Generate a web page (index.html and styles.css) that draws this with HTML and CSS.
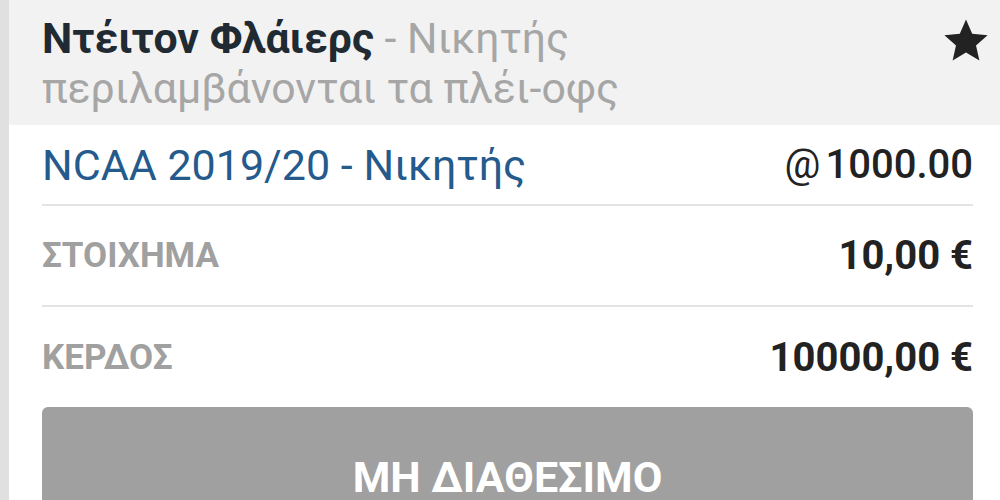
FILE: index.html
```html
<!DOCTYPE html>
<html lang="el">
<head>
<meta charset="utf-8">
<link rel="stylesheet" href="styles.css">
</head>
<body>
<div class="page">
  <div class="rail"></div>
  <div class="card">
    <div class="head">
      <div class="head-text">
        <div class="title"><span class="team">Ντέιτον Φλάιερς</span><span class="sub"> - Νικητής</span></div>
        <div class="note">περιλαμβάνονται τα πλέι-οφς</div>
      </div>
      <div class="star">
        <svg class="star-icon" viewBox="0 0 24 24" width="48" height="48"><path d="M12 1.8l3.1 7.1 7.7.7-5.8 5.1 1.7 7.6L12 18.3 5.3 22.3l1.7-7.6-5.8-5.1 7.7-.7z" fill="#222"/></svg>
      </div>
    </div>
    <div class="body">
      <div class="row row-market">
        <span class="market">NCAA 2019/20 - Νικητής</span>
        <span class="odds"><span class="at">@</span>1000.00</span>
      </div>
      <div class="row row-val">
        <span class="label">ΣΤΟΙΧΗΜΑ</span>
        <span class="value">10,00 €</span>
      </div>
      <div class="row row-val last">
        <span class="label">ΚΕΡΔΟΣ</span>
        <span class="value">10000,00 €</span>
      </div>
      <div class="btn">ΜΗ ΔΙΑΘΕΣΙΜΟ</div>
    </div>
  </div>
</div>
</body>
</html>
```
FILE: styles.css
```css
html, body {
  margin: 0;
  padding: 0;
  background: #ffffff;
  font-family: Roboto, "Noto Sans", sans-serif;
}
.page {
  display: flex;
  width: 1000px;
  height: 500px;
  overflow: hidden;
}
.rail {
  width: 9px;
  flex: none;
  background: #e0e0e0;
}
.card {
  flex: 1;
  display: flex;
  flex-direction: column;
}
.head {
  flex: none;
  height: 125px;
  box-sizing: border-box;
  background: #f2f2f2;
  display: flex;
  justify-content: space-between;
  padding: 13px 10px 0 33px;
}
.title {
  font-size: 42.8px;
  line-height: 50px;
}
.team {
  font-weight: 700;
  color: #1f2a33;
}
.sub {
  color: #a6a6a6;
}
.note {
  font-size: 42.8px;
  line-height: 50px;
  color: #a6a6a6;
}
.star {
  margin-top: 3px;
}
.star-icon {
  display: block;
}
.body {
  flex: none;
  padding: 0 27px 0 33px;
}
.row {
  display: flex;
  justify-content: space-between;
  align-items: center;
  border-bottom: 2px solid #e4e4e4;
}
.row-market {
  height: 79px;
}
.market {
  font-size: 43px;
  color: #245a8c;
}
.odds {
  font-size: 40px;
  font-weight: 500;
  color: #222;
}
.at {
  font-weight: 400;
  margin-right: 5px;
}
.row-val {
  height: 99px;
}
.row-val.last {
  border-bottom: none;
  height: 100px;
}
.label {
  font-size: 35px;
  font-weight: 700;
  color: #a0a0a0;
}
.value {
  font-size: 40px;
  font-weight: 700;
  color: #222;
}
.btn {
  height: 110px;
  border-radius: 6px;
  background: #a0a0a0;
  color: #fff;
  font-weight: 700;
  font-size: 43px;
  text-align: center;
  line-height: 140px;
}
```
